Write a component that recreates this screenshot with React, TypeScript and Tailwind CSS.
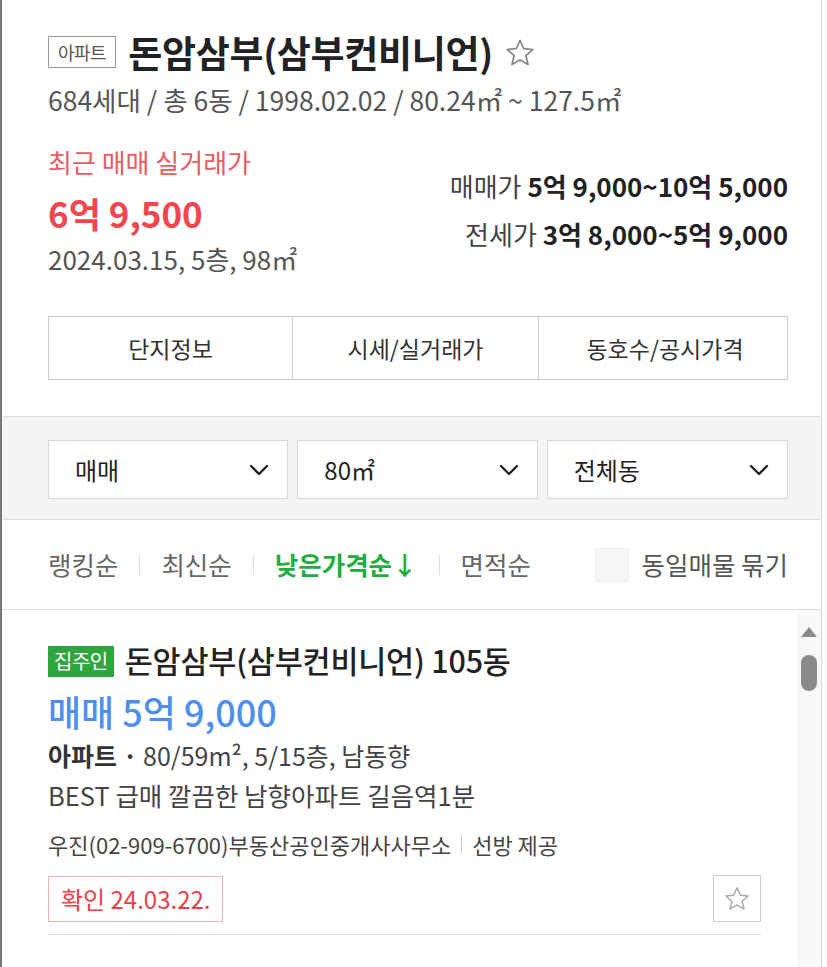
import React from 'react';

const Star = ({ size, color }: { size: number; color: string }) => (
  <svg width={size} height={size} viewBox="0 0 24 24" fill="none">
    <path
      d="M12 2.5l2.8 6.3 6.8.6-5.2 4.5 1.6 6.7L12 17.1l-6 3.5 1.6-6.7-5.2-4.5 6.8-.6z"
      stroke={color}
      strokeWidth="1.3"
      strokeLinejoin="round"
    />
  </svg>
);

const Chevron = () => (
  <svg width="20" height="12" viewBox="0 0 20 12" fill="none">
    <path d="M2 2l8 8 8-8" stroke="#222" strokeWidth="2.4" strokeLinecap="round" strokeLinejoin="round" />
  </svg>
);

const selects = ['매매', '80㎡', '전체동'];
const tabs = ['단지정보', '시세/실거래가', '동호수/공시가격'];
const sorts = ['랭킹순', '최신순', '낮은가격순↓', '면적순'];

export default function App() {
  return (
    <div className="w-[827px] h-[967px] bg-white flex overflow-hidden font-['Noto_Sans_CJK_KR',sans-serif] text-[#222]">
      <div className="w-[822px] border-l-2 border-[#777] border-r border-r-[#d8d8d8] flex flex-col">
        {/* header */}
        <div className="pl-[46px] pr-[33px] pt-[31px] pb-[36px] border-b border-[#ddd]">
          <div className="flex items-center h-[42px]">
            <span className="border border-[#999] text-[#555] text-[18px] leading-none px-[9px] h-[32px] flex items-center tracking-[-0.5px]">아파트</span>
            <h1 className="ml-[12px] text-[37px] font-bold tracking-[-0.3px] leading-none">돈암삼부(삼부컨비니언)</h1>
            <span className="ml-[11px] mt-[2px]"><Star size={32} color="#888" /></span>
          </div>
          <p className="mt-[12px] text-[26.5px] leading-[30px] text-[#555]">684세대 / 총 6동 / 1998.02.02 / 80.24㎡ ~ 127.5㎡</p>

          <div className="mt-[32px] flex justify-between items-start">
            <div>
              <p className="text-[26px] leading-[30px] text-[#ea5a62]">최근 매매 실거래가</p>
              <p className="mt-[15px] text-[35px] leading-[42px] font-bold text-[#f0464f]">6억 9,500</p>
              <p className="mt-[10px] text-[26px] leading-[30px] text-[#555]">2024.03.15, 5층, 98㎡</p>
            </div>
            <div className="pt-[24px] flex flex-col items-end gap-[18px] text-[26px] leading-[30px]">
              <p><span className="text-[#444]">매매가</span> <span className="font-bold">5억 9,000~10억 5,000</span></p>
              <p><span className="text-[#444]">전세가</span> <span className="font-bold">3억 8,000~5억 9,000</span></p>
            </div>
          </div>

          <div className="mt-[42px] grid grid-cols-[243px_246px_253px] border border-[#ccc] h-[64px]">
            {tabs.map((t, i) => (
              <div key={t} className={`flex items-center justify-center text-[23px] text-[#333] ${i > 0 ? 'border-l border-[#ccc]' : ''}`}>{t}</div>
            ))}
          </div>
        </div>

        {/* filters */}
        <div className="bg-[#f4f4f4] pl-[46px] pr-[33px] pt-[23px] pb-[20px] border-b border-[#ddd] flex gap-[9px]">
          {selects.map((s, i) => (
            <div key={s} className={`${i === 2 ? 'w-[242px]' : 'w-[241px]'} h-[59px] bg-white border border-[#d6d6d6] flex items-center justify-between pl-[26px] pr-[18px]`}>
              <span className="text-[24px] text-[#222]">{s}</span>
              <Chevron />
            </div>
          ))}
        </div>

        {/* sort */}
        <div className="h-[90px] pl-[46px] pr-[33px] border-b border-[#ddd] flex items-center">
          {sorts.map((s, i) => (
            <React.Fragment key={s}>
              {i > 0 && <span className="mx-[21px] w-px h-[20px] bg-[#ddd]" />}
              <span className={`text-[25.5px] ${i === 2 ? 'font-bold text-[#1fae3d]' : 'text-[#666]'}`}>{s}</span>
            </React.Fragment>
          ))}
          <span className="ml-auto w-[34px] h-[34px] bg-[#f5f6f7] border border-[#eee]" />
          <span className="ml-[13px] text-[25.5px] text-[#555]">동일매물 묶기</span>
        </div>

        {/* list */}
        <div className="flex-1 flex">
          <div className="flex-1 pl-[46px] pr-[36px] pt-[35px]">
            <div className="flex items-center h-[32px]">
              <span className="bg-[#2fa63d] text-white text-[20px] h-[31px] px-[6px] flex items-center tracking-[-0.5px]">집주인</span>
              <span className="ml-[11px] text-[30.5px] font-medium tracking-[-0.2px]">돈암삼부(삼부컨비니언) 105동</span>
            </div>
            <p className="mt-[13px] text-[36px] leading-[42px] font-medium text-[#4f8fec]">매매 5억 9,000</p>
            <p className="mt-[8px] text-[25px] leading-[30px] text-[#444]"><span className="font-bold text-[#333]">아파트 ·</span> 80/59m², 5/15층, 남동향</p>
            <p className="mt-[10px] text-[25.5px] leading-[30px] text-[#444]">BEST 급매 깔끔한 남향아파트 길음역1분</p>
            <p className="mt-[19px] text-[22px] leading-[30px] text-[#444] flex items-center">
              우진(02-909-6700)부동산공인중개사사무소
              <span className="mx-[10px] w-px h-[18px] bg-[#ccc]" />
              선방 제공
            </p>
            <div className="mt-[16px] flex items-center justify-between">
              <span className="border border-[#f3b3b6] text-[#ee3e48] text-[24px] h-[46px] pl-[12px] pr-[12px] flex items-center">확인 24.03.22.</span>
              <span className="w-[48px] h-[47px] border border-[#ccc] flex items-center justify-center"><Star size={28} color="#aaa" /></span>
            </div>
            <div className="mt-[12px] h-px bg-[#ddd]" />
          </div>
          <div className="w-[24px] bg-[#f8f8f8] flex flex-col items-center pt-[16px]">
            <svg width="18" height="12" viewBox="0 0 18 12"><path d="M9 1l8 10H1z" fill="#8a8a8a" /></svg>
            <span className="mt-[17px] w-[16px] h-[36px] rounded-full bg-[#8a8a8a]" />
          </div>
        </div>
      </div>
      <div className="w-[3px] bg-white" />
    </div>
  );
}
